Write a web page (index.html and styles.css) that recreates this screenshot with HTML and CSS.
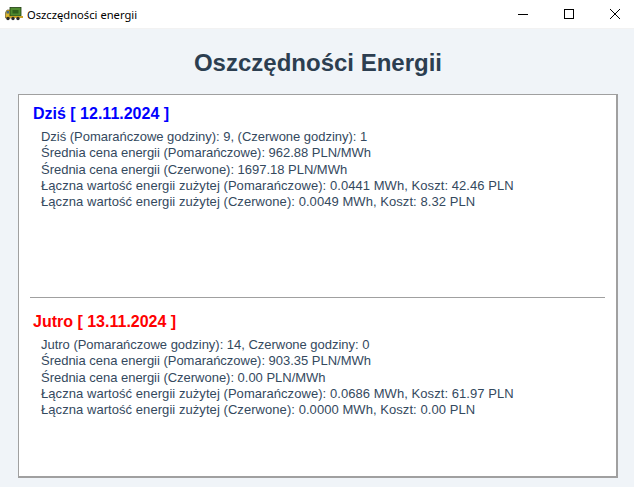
FILE: index.html
```html
<!DOCTYPE html>
<html lang="pl">
<head>
<meta charset="utf-8">
<title>Oszczędności energii</title>
<link rel="stylesheet" href="styles.css">
</head>
<body>
<div class="titlebar">
  <svg class="app-icon" width="18" height="14" viewBox="0 0 18 14">
    <path d="M0.5 10V5.5L2 3h4v8H0.5z" fill="#d9b42c" stroke="#5a4a10" stroke-width="0.6"/>
    <rect x="1.5" y="4" width="2.5" height="2.5" fill="#4a6a80"/>
    <rect x="5" y="0.5" width="11" height="8.5" fill="#4f8a2e" stroke="#1f3d12" stroke-width="0.8"/>
    <rect x="7.5" y="3" width="6" height="3.5" fill="#2f5f1c"/>
    <rect x="5" y="9" width="13" height="2" fill="#c9a227"/>
    <circle cx="3" cy="11.5" r="1.7" fill="#2a2a2a"/>
    <circle cx="8" cy="11.5" r="1.7" fill="#2a2a2a"/>
    <circle cx="13" cy="11.5" r="1.7" fill="#2a2a2a"/>
  </svg>
  <span class="window-title">Oszczędności energii</span>
  <div class="window-controls">
    <span class="win-btn"><svg width="12" height="12" viewBox="0 0 12 12"><path d="M1 6.5h10" stroke="#000" fill="none"/></svg></span>
    <span class="win-btn"><svg width="12" height="12" viewBox="0 0 12 12"><rect x="1.5" y="1.5" width="9" height="9" stroke="#000" fill="none"/></svg></span>
    <span class="win-btn"><svg width="12" height="12" viewBox="0 0 12 12"><path d="M1 1l10 10M11 1L1 11" stroke="#000" fill="none"/></svg></span>
  </div>
</div>
<main class="content">
  <h1 class="heading">Oszczędności Energii</h1>
  <div class="panel">
    <section class="day day-today">
      <h2 class="day-title blue">Dziś [ 12.11.2024 ]</h2>
      <div class="stats">
        <div class="tight">Dziś (Pomarańczowe godziny): 9, (Czerwone godziny): 1</div>
        <div class="tight">Średnia cena energii (Pomarańczowe): 962.88 PLN/MWh</div>
        <div class="tight">Średnia cena energii (Czerwone): 1697.18 PLN/MWh</div>
        <div>Łączna wartość energii zużytej (Pomarańczowe): 0.0441 MWh, Koszt: 42.46 PLN</div>
        <div>Łączna wartość energii zużytej (Czerwone): 0.0049 MWh, Koszt: 8.32 PLN</div>
      </div>
    </section>
    <hr class="divider">
    <section class="day day-tomorrow">
      <h2 class="day-title red">Jutro [ 13.11.2024 ]</h2>
      <div class="stats">
        <div class="tight">Jutro (Pomarańczowe godziny): 14, Czerwone godziny: 0</div>
        <div class="tight">Średnia cena energii (Pomarańczowe): 903.35 PLN/MWh</div>
        <div class="tight">Średnia cena energii (Czerwone): 0.00 PLN/MWh</div>
        <div>Łączna wartość energii zużytej (Pomarańczowe): 0.0686 MWh, Koszt: 61.97 PLN</div>
        <div>Łączna wartość energii zużytej (Czerwone): 0.0000 MWh, Koszt: 0.00 PLN</div>
      </div>
    </section>
  </div>
</main>
</body>
</html>
```
FILE: styles.css
```css
* { box-sizing: border-box; }
html, body { margin: 0; padding: 0; height: 100%; }
body {
  width: 634px;
  height: 487px;
  overflow: hidden;
  background: #f0f4f8;
  font-family: "Liberation Sans", Arial, sans-serif;
  display: flex;
  flex-direction: column;
}
.titlebar {
  height: 29px;
  flex: none;
  background: #fff;
  border-bottom: 1px solid #f2f2f2;
  display: flex;
  align-items: center;
  padding-left: 5px;
}
.app-icon { flex: none; margin-right: 4px; }
.window-title {
  font-family: "Noto Sans", "Open Sans", sans-serif;
  font-size: 11.2px;
  color: #000;
  flex: 1;
}
.window-controls { display: flex; height: 100%; margin-right: -4px; }
.win-btn {
  width: 46px;
  display: flex;
  align-items: center;
  justify-content: center;
}
.content {
  flex: 1;
  display: flex;
  flex-direction: column;
  padding: 0 16px 9px 18px;
  min-height: 0;
}
.heading {
  margin: 0;
  padding-top: 19px;
  height: 65px;
  text-align: center;
  font-size: 24px;
  line-height: 30px;
  font-weight: 700;
  color: #2c3e50;
}
.panel {
  flex: 1;
  background: #fff;
  border: 1px solid #a0a0a0;
  border-right: 2px solid #a0a0a0;
  border-bottom: 2px solid #a0a0a0;
  padding: 0 11px;
  display: flex;
  flex-direction: column;
}
.day { flex: none; }
.day-today { height: 202px; }
.day-title {
  margin: 0;
  padding: 9px 0 0 3px;
  font-size: 16px;
  line-height: 20px;
  font-weight: 700;
}
.blue { color: #0000ff; }
.red { color: #ff0000; }
.divider {
  margin: 0;
  border: none;
  border-top: 1px solid #a0a0a0;
  flex: none;
  height: 1px;
}
.day-tomorrow .day-title { padding-top: 14px; }
.stats {
  margin-top: 5px;
  padding-left: 11px;
  font-size: 13px;
  letter-spacing: 0.06px;
  line-height: 16.25px;
  color: #34495e;
}
.stats .tight { letter-spacing: -0.02px; }
```
